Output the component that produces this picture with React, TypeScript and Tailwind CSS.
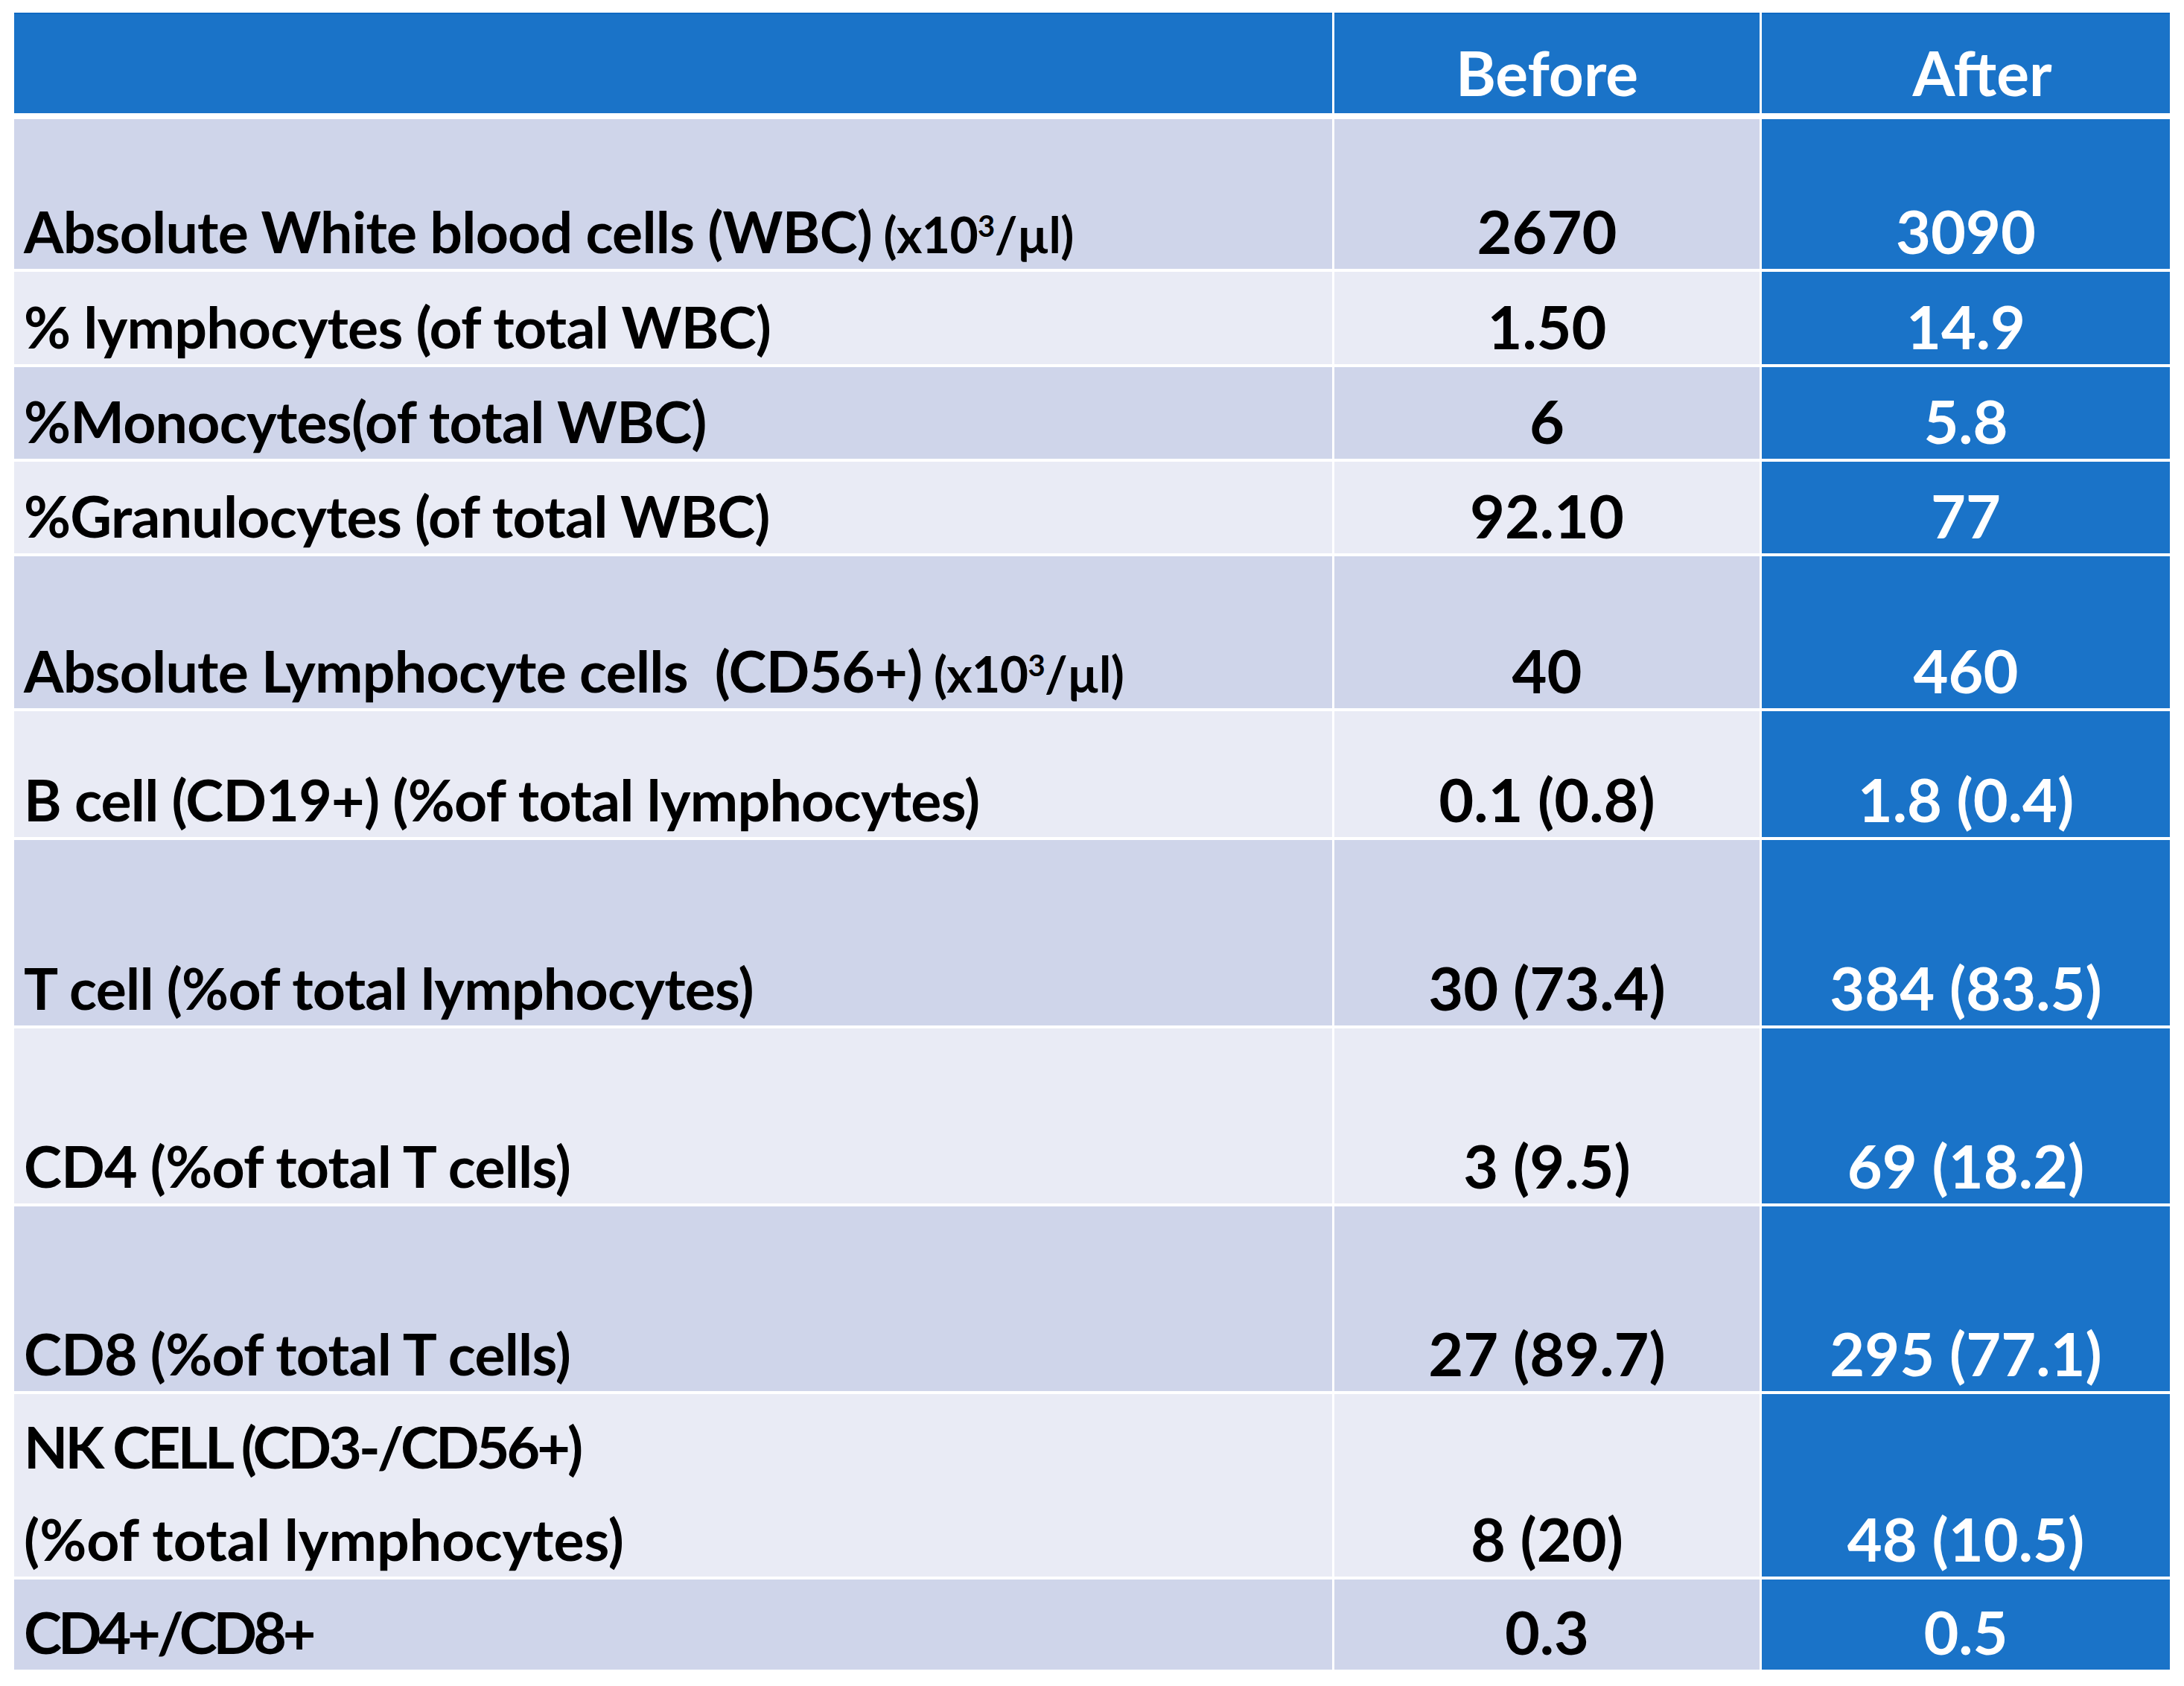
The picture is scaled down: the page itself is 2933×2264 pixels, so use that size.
import React from 'react';

type Line = { text: string; tight?: string };

type Row = {
    label: Line[];
    unit?: boolean;
    before: string;
    after: string;
    h: string;
    dark: boolean;
};

const rows: Row[] = [
    { label: [{ text: 'Absolute White blood cells (WBC)' }], unit: true, before: '2670', after: '3090', h: 'h-[201px]', dark: true },
    { label: [{ text: '% lymphocytes (of total WBC)' }], before: '1.50', after: '14.9', h: 'h-[124px]', dark: false },
    { label: [{ text: '%Monocytes(of total WBC)' }], before: '6', after: '5.8', h: 'h-[123px]', dark: true },
    { label: [{ text: '%Granulocytes (of total WBC)' }], before: '92.10', after: '77', h: 'h-[123px]', dark: false },
    { label: [{ text: 'Absolute Lymphocyte cells  (CD56+)' }], unit: true, before: '40', after: '460', h: 'h-[204px]', dark: true },
    { label: [{ text: 'B cell (CD19+) (%of total lymphocytes)' }], before: '0.1 (0.8)', after: '1.8 (0.4)', h: 'h-[169px]', dark: false },
    { label: [{ text: 'T cell (%of total lymphocytes)' }], before: '30 (73.4)', after: '384 (83.5)', h: 'h-[249px]', dark: true },
    { label: [{ text: 'CD4 (%of total T cells)' }], before: '3 (9.5)', after: '69 (18.2)', h: 'h-[235px]', dark: false },
    { label: [{ text: 'CD8 (%of total T cells)' }], before: '27 (89.7)', after: '295 (77.1)', h: 'h-[248px]', dark: true },
    {
        label: [
            { text: 'NK CELL (CD3-/CD56+)', tight: 'tracking-[-0.05em]' },
            { text: '(%of total lymphocytes)', tight: 'tracking-[0em]' },
        ],
        before: '8 (20)',
        after: '48 (10.5)',
        h: 'h-[245px]',
        dark: false,
    },
    { label: [{ text: 'CD4+/CD8+', tight: 'tracking-[-0.065em]' }], before: '0.3', after: '0.5', h: 'h-[121px]', dark: true },
];

function Unit() {
    return (
        <span className="text-[66px] tracking-[-0.01em]">
            {' '}(x10<span className="text-[40px] align-[22px]">3</span>/µl)
        </span>
    );
}

function LabelCell({ row }: { row: Row }) {
    const bg = row.dark ? 'bg-[#cfd5ea]' : 'bg-[#e9ebf5]';
    return (
        <div className={`flex flex-col justify-end pl-[13px] pb-[12px] ${bg}`}>
            {row.label.map((line, i) => (
                <div
                    key={i}
                    className={`whitespace-pre text-[77px] leading-none ${line.tight ?? 'tracking-[-0.01em]'} ${i > 0 ? 'mt-[47px]' : ''}`}
                >
                    {line.text}
                    {row.unit && <Unit />}
                </div>
            ))}
        </div>
    );
}

function TableRow({ row }: { row: Row }) {
    const bg = row.dark ? 'bg-[#cfd5ea]' : 'bg-[#e9ebf5]';
    return (
        <div className={`grid grid-cols-[1770px_571px_548px] gap-x-[3px] ${row.h}`}>
            <LabelCell row={row} />
            <div className={`flex items-end justify-center pb-[11px] text-[81px] leading-none ${bg}`}>
                {row.before}
            </div>
            <div className="flex items-end justify-center pb-[11px] text-[81px] leading-none bg-[#1a73c8] text-white">
                {row.after}
            </div>
        </div>
    );
}

export default function App() {
    return (
        <div className="min-h-screen bg-white pt-[17px] pl-[19px] text-black font-bold [font-family:Lato,'Liberation_Sans',sans-serif]">
            <div className="w-[2895px] bg-white">
                <div className="grid grid-cols-[1770px_571px_548px] gap-x-[3px] h-[135px]">
                    <div className="bg-[#1a73c8] border-t-2 border-[#0f69c2]" />
                    <div className="flex items-end justify-center pb-[14px] bg-[#1a73c8] border-t-2 border-[#0f69c2] text-white text-[82px] leading-none">
                        Before
                    </div>
                    <div className="flex items-end justify-center pb-[14px] pl-[44px] bg-[#1a73c8] border-t-2 border-[#0f69c2] text-white text-[82px] leading-none">
                        After
                    </div>
                </div>
                <div className="mt-[8px] flex flex-col gap-y-[4px]">
                    {rows.map((row, i) => (
                        <TableRow key={i} row={row} />
                    ))}
                </div>
            </div>
        </div>
    );
}
